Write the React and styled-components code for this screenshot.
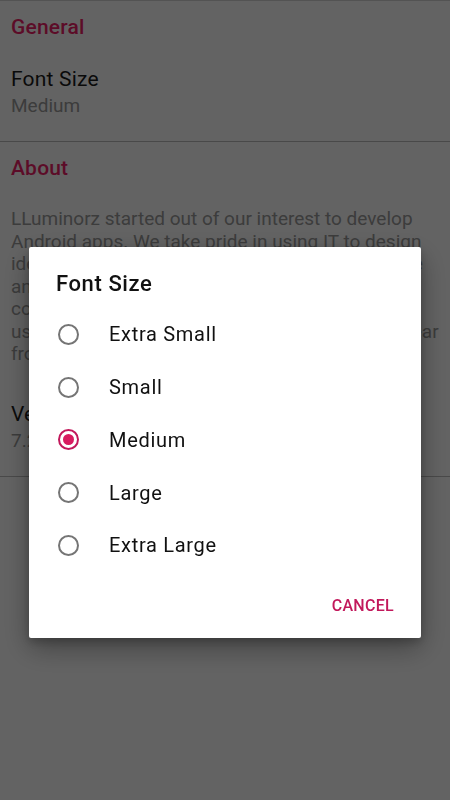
import React, { useState } from 'react';
import styled, { createGlobalStyle } from 'styled-components';

const GlobalStyle = createGlobalStyle`
      html, body {
            margin: 0;
            padding: 0;
            background: #ffffff;
      }
      body {
            font-family: Roboto, "Noto Sans", "Liberation Sans", sans-serif;
            -webkit-font-smoothing: antialiased;
      }
`

const Page = styled.div`
      width: 450px;
      min-height: 800px;
      background: #ffffff;
      border-top: 1px solid #d6d6d6;
      box-sizing: border-box;
`

const CategoryTitle = styled.div`
      padding: ${props => props.top || 13}px 11px 0;
      font-size: 21px;
      line-height: 26px;
      font-weight: 500;
      letter-spacing: 0.2px;
      color: #ee1f68;
`

const Pref = styled.div`
      padding: ${props => props.top || 26}px 11px ${props => props.bottom || 23}px;
      border-bottom: ${props => props.divider ? '1px solid #bdbdbd' : 'none'};
`

const PrefTitle = styled.div`
      font-size: 21px;
      line-height: 26px;
      letter-spacing: 0.2px;
      color: #1c1c1c;
`

const PrefSummary = styled.div`
      margin-top: 2px;
      font-size: 19px;
      line-height: 24px;
      color: #9a9a9a;
`

const AboutText = styled.p`
      margin: 0;
      font-size: 19px;
      line-height: 22.5px;
      color: #9a9a9a;
`

const Scrim = styled.div`
      position: fixed;
      inset: 0;
      background: rgba(0, 0, 0, 0.61);
      display: flex;
      justify-content: center;
      align-items: flex-start;
      padding-top: 247px;
`

const Dialog = styled.div`
      width: 392px;
      background: #ffffff;
      border-radius: 2px;
      box-shadow: 0 10px 28px rgba(0, 0, 0, 0.35), 0 4px 10px rgba(0, 0, 0, 0.2);
      padding-bottom: 14px;
`

const DialogTitle = styled.div`
      padding: 24px 27px 0;
      margin-bottom: 11px;
      font-size: 22px;
      line-height: 26px;
      font-weight: 500;
      letter-spacing: 0.6px;
      color: #111111;
`

const Options = styled.div`
      display: flex;
      flex-direction: column;
`

const Option = styled.label`
      display: flex;
      align-items: center;
      height: 52.75px;
      padding-left: 29px;
      cursor: pointer;
`

const Radio = styled.span`
      width: 21px;
      height: 21px;
      box-sizing: border-box;
      border-radius: 50%;
      border: 2px solid ${props => props.checked ? '#c2185b' : '#757575'};
      display: flex;
      align-items: center;
      justify-content: center;
      flex-shrink: 0;

      &::after {
            content: '';
            width: 11px;
            height: 11px;
            border-radius: 50%;
            background: #d81b60;
            display: ${props => props.checked ? 'block' : 'none'};
      }
`

const OptionLabel = styled.span`
      margin-left: 30px;
      font-size: 20px;
      letter-spacing: 0.7px;
      color: #111111;
`

const Actions = styled.div`
      display: flex;
      justify-content: flex-end;
      margin-top: 16px;
      padding-right: 19px;
`

const TextButton = styled.button`
      height: 36px;
      padding: 0 8px;
      border: none;
      background: transparent;
      font-family: Roboto, "Noto Sans", "Liberation Sans", sans-serif;
      font-size: 16px;
      font-weight: 500;
      letter-spacing: 0.3px;
      color: #c2185b;
      cursor: pointer;
`

const sizes = ['Extra Small', 'Small', 'Medium', 'Large', 'Extra Large'];

const App = () => {
      const [size, setSize] = useState('Medium');

      return (
            <>
                  <GlobalStyle />
                  <Page>
                        <CategoryTitle top={13}>General</CategoryTitle>
                        <Pref divider>
                              <PrefTitle>Font Size</PrefTitle>
                              <PrefSummary>{size}</PrefSummary>
                        </Pref>
                        <CategoryTitle top={13}>About</CategoryTitle>
                        <Pref top={27} bottom={9}>
                              <AboutText>
                                    LLuminorz started out of our interest to develop Android apps. We take pride in using IT to design ideas that are useful and accessible for everyone and easy to use. We would like to thank all our community for their support and for all of the useful feedback they have given us in the past year from the very beginning.
                              </AboutText>
                        </Pref>
                        <Pref divider>
                              <PrefTitle>Version</PrefTitle>
                              <PrefSummary>7.2.0</PrefSummary>
                        </Pref>
                  </Page>
                  <Scrim>
                        <Dialog>
                              <DialogTitle>Font Size</DialogTitle>
                              <Options>
                                    {sizes.map(s => (
                                          <Option key={s} onClick={() => setSize(s)}>
                                                <Radio checked={s === size} />
                                                <OptionLabel>{s}</OptionLabel>
                                          </Option>
                                    ))}
                              </Options>
                              <Actions>
                                    <TextButton>CANCEL</TextButton>
                              </Actions>
                        </Dialog>
                  </Scrim>
            </>
      );
}

export default App;
